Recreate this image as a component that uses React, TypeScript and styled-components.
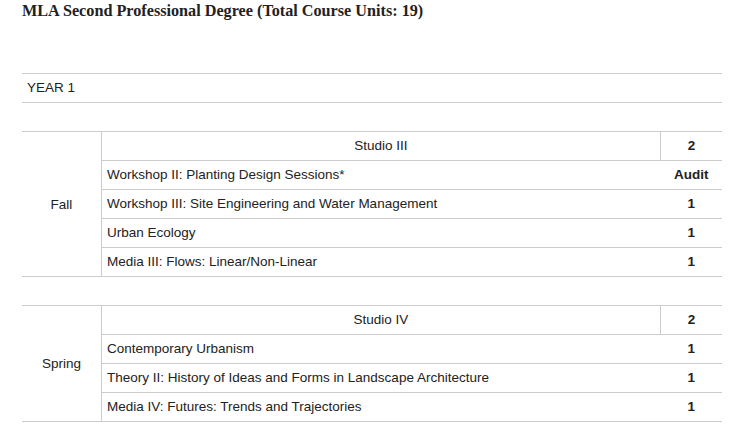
import React from 'react'
import styled, { createGlobalStyle } from 'styled-components'

type Course = {
  name: string
  units: string
}

type Term = {
  season: string
  studio: Course
  courses: Course[]
}

const terms: Term[] = [
  {
    season: 'Fall',
    studio: { name: 'Studio III', units: '2' },
    courses: [
      { name: 'Workshop II: Planting Design Sessions*', units: 'Audit' },
      { name: 'Workshop III: Site Engineering and Water Management', units: '1' },
      { name: 'Urban Ecology', units: '1' },
      { name: 'Media III: Flows: Linear/Non-Linear', units: '1' },
    ],
  },
  {
    season: 'Spring',
    studio: { name: 'Studio IV', units: '2' },
    courses: [
      { name: 'Contemporary Urbanism', units: '1' },
      { name: 'Theory II: History of Ideas and Forms in Landscape Architecture', units: '1' },
      { name: 'Media IV: Futures: Trends and Trajectories', units: '1' },
    ],
  },
]

const GlobalStyle = createGlobalStyle`
  body {
    margin: 0;
    background: #fff;
    color: #333;
    font-family: "Liberation Sans", Arial, sans-serif;
  }
`

export default function App() {
  return (
    <>
      <GlobalStyle />
      <Page>
        <Title>MLA Second Professional Degree (Total Course Units: 19)</Title>
        <YearRow>YEAR 1</YearRow>
        {terms.map((term) => (
          <TermTable key={term.season}>
            <tbody>
              <tr>
                <SeasonCell rowSpan={term.courses.length + 1}>{term.season}</SeasonCell>
                <CourseCell $center>{term.studio.name}</CourseCell>
                <UnitCell $divider>{term.studio.units}</UnitCell>
              </tr>
              {term.courses.map((course) => (
                <tr key={course.name}>
                  <CourseCell>{course.name}</CourseCell>
                  <UnitCell>{course.units}</UnitCell>
                </tr>
              ))}
            </tbody>
          </TermTable>
        ))}
      </Page>
    </>
  )
}

const Page = styled.div`
  width: 700px;
  margin-left: 22px;
  padding-top: 1px;
`

const Title = styled.h2`
  margin: 0 0 52px;
  font-family: "Liberation Serif", "Times New Roman", serif;
  font-weight: bold;
  font-size: 16.2px;
  line-height: 20px;
  color: #222;
`

const YearRow = styled.div`
  height: 28px;
  line-height: 27px;
  padding-left: 5px;
  border-top: 1px solid #ccc;
  border-bottom: 1px solid #ccc;
  font-size: 13.5px;
  color: #222;
  margin-bottom: 28px;
`

const TermTable = styled.table`
  width: 100%;
  border-collapse: collapse;
  border-top: 1px solid #ccc;
  border-bottom: 1px solid #ccc;
  margin-bottom: 28px;
  font-size: 13.5px;
  color: #222;
`

const SeasonCell = styled.td`
  width: 79px;
  padding: 0;
  text-align: center;
  vertical-align: middle;
  border-right: 1px solid #ccc;
`

const CourseCell = styled.td<{ $center?: boolean }>`
  height: 27px;
  padding: 0 5px 1px;
  text-align: ${(p) => (p.$center ? 'center' : 'left')};
  border-bottom: 1px solid #ccc;
`

const UnitCell = styled.td<{ $divider?: boolean }>`
  width: 61px;
  padding: 0 0 1px;
  text-align: center;
  font-weight: bold;
  border-bottom: 1px solid #ccc;
  border-left: ${(p) => (p.$divider ? '1px solid #ccc' : 'none')};
`
